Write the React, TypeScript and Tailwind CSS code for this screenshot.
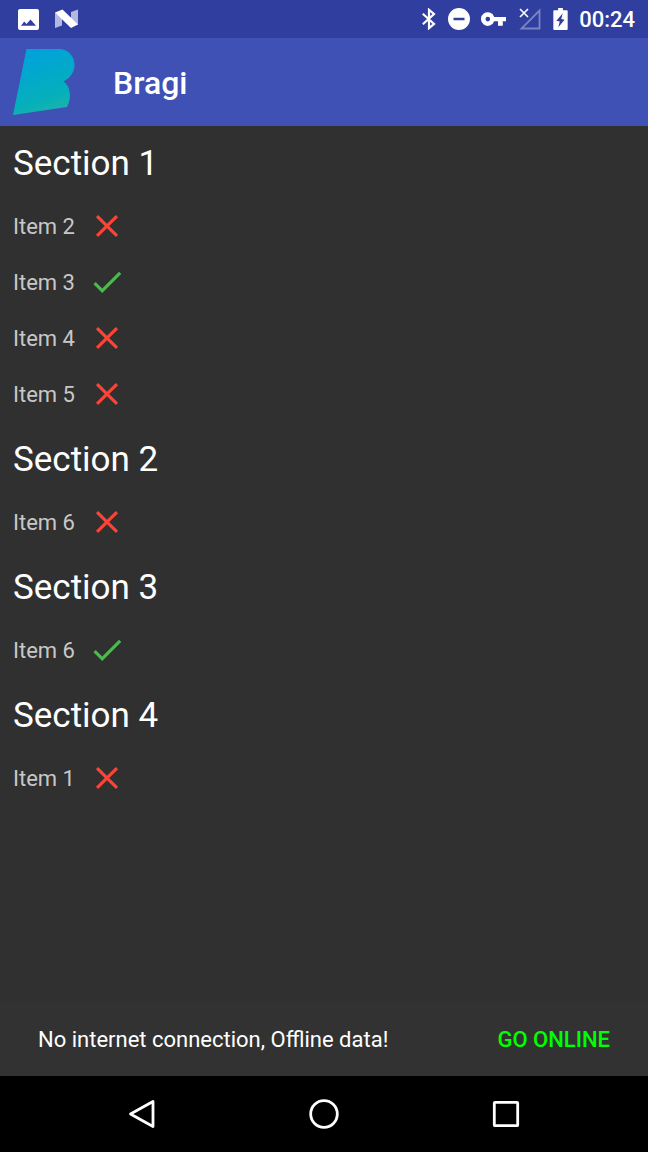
import React from "react";

type Item = { label: string; done: boolean };
type Section = { title: string; items: Item[] };

const sections: Section[] = [
  {
    title: "Section 1",
    items: [
      { label: "Item 2", done: false },
      { label: "Item 3", done: true },
      { label: "Item 4", done: false },
      { label: "Item 5", done: false },
    ],
  },
  { title: "Section 2", items: [{ label: "Item 6", done: false }] },
  { title: "Section 3", items: [{ label: "Item 6", done: true }] },
  { title: "Section 4", items: [{ label: "Item 1", done: false }] },
];

function StatusBar() {
  return (
    <div className="flex h-[38px] items-center justify-between bg-[#303f9f] pr-[13px] pl-[18px] text-white">
      <div className="flex items-center gap-4">
        <svg className="h-[21px] w-[21px]" viewBox="0 0 21 21" aria-label="Picture" role="img">
          <path
            fill="currentColor"
            fillRule="evenodd"
            d="M2 0h17a2 2 0 0 1 2 2v17a2 2 0 0 1-2 2H2A2 2 0 0 1 0 19V2A2 2 0 0 1 2 0zM3 16.800h15l-5.500-6.300-4 4.500-2.300-2.500z"
          />
        </svg>
        <svg className="h-5 w-6" viewBox="0 0 24 20" aria-label="Android N" role="img">
          <path fill="#b3b9de" d="M0 3.500 7 8v8.500L0 19z" />
          <path fill="#b3b9de" d="M16 3l7-2.500V16l-7-5z" />
          <path fill="#fff" d="M0 3.500 7.500.5 23 15.500 16 19z" />
        </svg>
      </div>
      <div className="flex items-center">
        <svg className="mr-3 h-[22px] w-[14px]" viewBox="0 0 14 22" aria-label="Bluetooth" role="img">
          <path
            d="M.8 5.700 12 16l-5 4.200V1.800L12 6 .8 16.300"
            fill="none"
            stroke="currentColor"
            strokeWidth="2.200"
          />
        </svg>
        <svg className="mr-[11px] h-[22px] w-[22px]" viewBox="0 0 22 22" aria-label="Do not disturb" role="img">
          <path
            fill="currentColor"
            fillRule="evenodd"
            d="M11 0a11 11 0 1 0 0 22 11 11 0 0 0 0-22zM5.500 9.800h11v2.400h-11z"
          />
        </svg>
        <svg className="mr-3 h-[14px] w-[26px]" viewBox="0 0 26 14" aria-label="VPN" role="img">
          <path
            fill="currentColor"
            fillRule="evenodd"
            d="M13.200 4.900A6.800 6.800 0 1 0 13.200 9.300H17v4.400h4.800V9.300H25V4.900zM6.800 4.800a2.300 2.300 0 1 1 0 4.600 2.300 2.300 0 0 1 0-4.600z"
          />
        </svg>
        <svg className="mr-3 h-[22px] w-[22px]" viewBox="0 0 22 22" aria-label="No signal" role="img">
          <path d="M2.500 20.500H20.500V2.500z" fill="none" stroke="#7a84c2" strokeWidth="1.800" />
          <path d="M1 1l8 8M9 1 1 9" fill="none" stroke="currentColor" strokeWidth="1.600" />
        </svg>
        <svg className="mr-[11px] h-[22px] w-[15px]" viewBox="0 0 15 23" aria-label="Battery charging" role="img">
          <path
            fill="currentColor"
            fillRule="evenodd"
            d="M5 0h5v2.400h4q1 0 1 1V22q0 1-1 1H1q-1 0-1-1V3.400q0-1 1-1h4zM9.800 5.500 3.200 13.200l3.500.8L5.200 20l6.600-7.700-3.500-.8z"
          />
        </svg>
        <span className="pt-0.5 text-[22px] leading-none font-medium">00:24</span>
      </div>
    </div>
  );
}

function Logo() {
  return (
    <svg className="h-[68px] w-[64px]" viewBox="0 0 64 68" aria-label="Bragi logo" role="img">
      <defs>
        <linearGradient id="logo" x1="20" y1="0" x2="42" y2="66" gradientUnits="userSpaceOnUse">
          <stop offset="0" stopColor="#00a1dc" />
          <stop offset="0.750" stopColor="#05b0ba" />
          <stop offset="1" stopColor="#1fb3aa" />
        </linearGradient>
      </defs>
      <path
        fill="url(#logo)"
        d="M13.500 1H46C55 1 61.500 8 61.500 17c0 7-4 13-11 16.500 7 4.500 8.500 16 3.500 25.500L0 67z"
      />
    </svg>
  );
}

function StateIcon({ done }: { done: boolean }) {
  return done ? (
    <svg className="h-[38px] w-[38px] text-[#4cb950]" viewBox="0 0 24 24" aria-label="Done" role="img">
      <path fill="currentColor" d="M9 16.170 4.830 12l-1.420 1.410L9 19 21 7l-1.410-1.410z" />
    </svg>
  ) : (
    <svg className="h-[38px] w-[38px] text-[#fc4336]" viewBox="0 0 24 24" aria-label="Not done" role="img">
      <path
        fill="currentColor"
        d="M19 6.410 17.590 5 12 10.590 6.410 5 5 6.410 10.590 12 5 17.590 6.410 19 12 13.410 17.590 19 19 17.590 13.410 12z"
      />
    </svg>
  );
}

export default function App() {
  return (
    <div className="flex min-h-screen flex-col bg-[#303030] font-['Roboto',sans-serif] text-white">
      <StatusBar />
      <header className="flex h-[88px] items-center gap-9 bg-[#3f51b5] px-[13px]">
        <Logo />
        <h1 className="pt-0.5 text-[32px] leading-none font-medium">Bragi</h1>
      </header>

      <main className="flex-1 px-[13px] pt-1">
        {sections.map((section) => (
          <section key={section.title} className="pb-1">
            <h2 className="flex h-[68px] items-center text-[35px]">{section.title}</h2>
            <ul>
              {section.items.map((item) => (
                <li key={item.label} className="flex h-14 items-center gap-[13px] text-[22px] text-[#c8c8c8]">
                  {item.label}
                  <StateIcon done={item.done} />
                </li>
              ))}
            </ul>
          </section>
        ))}
      </main>

      <div role="status" className="flex h-[75px] items-center justify-between bg-[#323232] px-[38px] pt-0.5 text-[22px]">
        <span>No internet connection, Offline data!</span>
        <button type="button" className="font-medium text-[#00ff00]">
          GO ONLINE
        </button>
      </div>

      <nav className="flex h-[76px] bg-black px-[51px]">
        <button type="button" aria-label="Back" className="flex flex-1 items-center justify-center">
          <svg className="h-[30px] w-[30px]" viewBox="0 0 30 30">
            <path
              d="M3.500 15 26 2.500v25z"
              fill="none"
              stroke="#fff"
              strokeWidth="2.800"
              strokeLinejoin="round"
            />
          </svg>
        </button>
        <button type="button" aria-label="Home" className="flex flex-1 items-center justify-center">
          <svg className="h-[30px] w-[30px]" viewBox="0 0 30 30">
            <circle cx="15" cy="15" r="13.300" fill="none" stroke="#fff" strokeWidth="2.800" />
          </svg>
        </button>
        <button type="button" aria-label="Recent apps" className="flex flex-1 items-center justify-center">
          <svg className="h-[30px] w-[30px]" viewBox="0 0 30 30">
            <rect x="3.300" y="3.300" width="23.400" height="23.400" rx="0.800" fill="none" stroke="#fff" strokeWidth="2.800" />
          </svg>
        </button>
      </nav>
    </div>
  );
}
